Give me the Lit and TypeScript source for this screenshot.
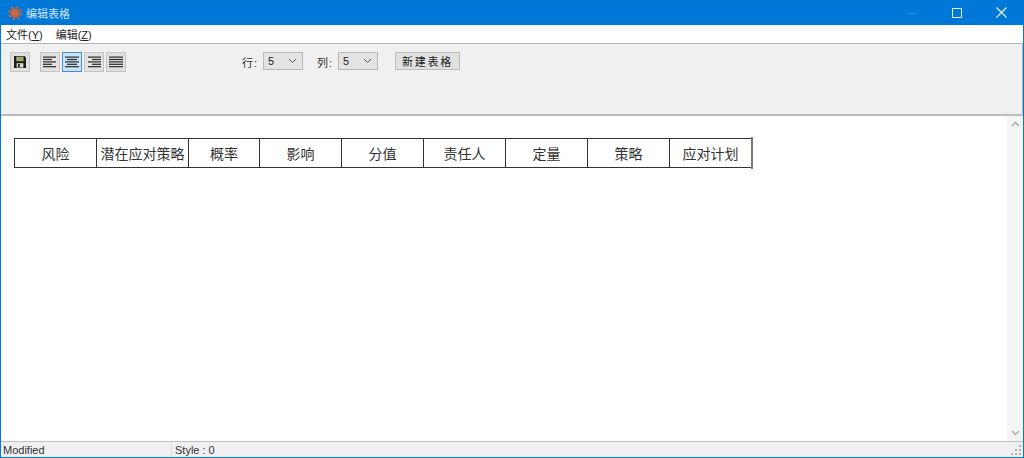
import { LitElement, html, css, svg } from "lit";
import { customElement } from "lit/decorators.js";

const FONT = `"Liberation Sans", "Noto Sans CJK SC", sans-serif`;
const COLS: [string, number][] = [
  ["风险", 82], ["潜在应对策略", 92], ["概率", 71], ["影响", 82], ["分值", 82],
  ["责任人", 82], ["定量", 82], ["策略", 82], ["应对计划", 82],
];
const alignIcon = (rows: [number, number][]) => html`<svg width="14" height="12" viewBox="0 0 14 12">
  ${rows.map(([x, w], i) => svg`<rect x=${x} y=${i * 2.4 + 0.5} width=${w} height="1.2" fill="#2a2a2a"></rect>`)}
</svg>`;

@customElement("app-root")
export class AppRoot extends LitElement {
  static styles = css`
    :host { display: block; width: 1024px; height: 458px; overflow: hidden; font-family: ${css([FONT] as any) && css`"Liberation Sans", "Noto Sans CJK SC", sans-serif`}; }
    .win { box-sizing: border-box; width: 1024px; height: 458px; display: flex; flex-direction: column; border: 1px solid #0078d7; border-top: 0; background: #fff; color: #1a1a1a; }
    .title { height: 25px; flex: none; background: #0078d7; margin: 0 -1px; display: flex; align-items: center; padding-left: 8px; color: #cfe4f7; font-size: 11px; }
    .title .name { margin-left: 4px; }
    .title .controls { margin-left: auto; display: flex; align-items: center; }
    .ctl { width: 45px; height: 25px; display: flex; align-items: center; justify-content: center; }
    .menu { height: 18px; flex: none; display: flex; align-items: center; gap: 13px; padding-left: 5px; font-size: 11px; background: #fff; color: #222; }
    .menu u { text-decoration: underline; }
    .toolbar { box-sizing: border-box; height: 73px; flex: none; background: #f0f0f0; border: 1px solid #b4b4b4; border-left: 0; border-right-width: 1px; border-bottom-width: 2px; border-bottom-color: #bdbdbd; padding: 8px 0 0 9px; display: flex; align-items: flex-start; }
    .tb { box-sizing: border-box; width: 20px; height: 20px; background: #e1e1e1; border: 1px solid #c4c4c4; display: flex; align-items: center; justify-content: center; }
    .tb.on { background: #cce4f7; border-color: #3b8fd0; }
    .saveb { margin-right: 10px; }
    .aligns { display: flex; gap: 2px; }
    .lbl { font-size: 11px; color: #333; margin-top: 2px; letter-spacing: 1px; }
    .l1 { margin-left: 116px; width: 21px; }
    .l2 { margin-left: 14px; width: 21px; }
    .sel { box-sizing: border-box; width: 40px; height: 18px; background: #e3e3e3; border: 1px solid #b8b8b8; display: flex; align-items: center; justify-content: space-between; padding: 0 5px 0 4px; font-size: 11px; color: #222; }
    .newb { box-sizing: border-box; margin-left: 17px; width: 65px; height: 18px; background: #e1e1e1; border: 1px solid #bcbcbc; font-size: 11px; color: #222; display: flex; align-items: center; justify-content: center; letter-spacing: 1.8px; }
    .body { flex: 1; min-height: 0; display: flex; }
    .doc { flex: 1; padding: 22px 0 0 13px; }
    .tbl { display: inline-flex; position: relative; box-sizing: border-box; height: 30px; border: solid #333; border-width: 1px 0 1px 1px; }
    .cell { box-sizing: border-box; height: 28px; border-right: 1px solid #333; font-size: 14px; color: #333; display: flex; align-items: center; justify-content: center; white-space: nowrap; }
    .caret { position: absolute; right: -1px; top: -2px; width: 2px; height: 32px; background: #777; }
    .sb { width: 16px; flex: none; background: #f4f4f4; display: flex; flex-direction: column; justify-content: space-between; align-items: center; padding: 5px 0; box-sizing: border-box; }
    .status { height: 16px; flex: none; box-sizing: border-box; background: #f0f0f0; border-top: 1px solid #c0c0c0; display: flex; align-items: center; font-size: 11px; color: #333; position: relative; }
    .s1 { width: 171px; padding-left: 2px; box-sizing: border-box; border-right: 1px solid #dcdcdc; height: 100%; display: flex; align-items: center; }
    .s2 { padding-left: 3px; }
    .grip { position: absolute; right: 1px; bottom: 1px; }
  `;

  render() {
    const chev = html`<svg width="9" height="6" viewBox="0 0 9 6"><path d="M1 1l3.5 3.5L8 1" fill="none" stroke="#555" stroke-width="1"/></svg>`;
    return html`<div class="win">
      <div class="title">
        <svg width="14" height="14" viewBox="0 0 14 14">
          <circle cx="7" cy="7" r="4.6" fill="#c9653f"/>
          <circle cx="7" cy="7" r="6" fill="none" stroke="#c9653f" stroke-width="2" stroke-dasharray="2.2 2.5"/>
        </svg>
        <span class="name">编辑表格</span>
        <div class="controls">
          <div class="ctl"><svg width="10" height="10" viewBox="0 0 10 10"><path d="M0 5.5h10" stroke="#2e8ede"/></svg></div>
          <div class="ctl"><svg width="10" height="10" viewBox="0 0 10 10"><rect x=".5" y=".5" width="9" height="9" fill="none" stroke="#e6f2fb"/></svg></div>
          <div class="ctl"><svg width="11" height="11" viewBox="0 0 11 11"><path d="M.5.5l10 10M10.5.5l-10 10" stroke="#f2f8fd" stroke-width="1.1"/></svg></div>
        </div>
      </div>
      <div class="menu"><span>文件(<u>Y</u>)</span><span>编辑(<u>Z</u>)</span></div>
      <div class="toolbar">
        <div class="tb saveb"><svg width="14" height="14" viewBox="0 0 14 14">
          <path d="M1 1h10.5L13 2.5V13H1z" fill="#1c1c1c"/>
          <rect x="3.2" y="1.6" width="7.4" height="4.6" fill="#9fa86a"/>
          <rect x="3.6" y="8.2" width="6.8" height="4.3" fill="#d8d8c8"/>
          <rect x="5" y="9" width="1.8" height="3" fill="#222"/>
        </svg></div>
        <div class="aligns">
          <div class="tb">${alignIcon([[0, 13], [0, 9], [0, 13], [0, 9], [0, 13]])}</div>
          <div class="tb on">${alignIcon([[0, 14], [2, 10], [0, 14], [2, 10], [0, 14]])}</div>
          <div class="tb">${alignIcon([[1, 13], [5, 9], [1, 13], [5, 9], [1, 13]])}</div>
          <div class="tb">${alignIcon([[0, 14], [0, 14], [0, 14], [0, 14], [0, 14]])}</div>
        </div>
        <span class="lbl l1">行:</span>
        <div class="sel"><span>5</span>${chev}</div>
        <span class="lbl l2">列:</span>
        <div class="sel"><span>5</span>${chev}</div>
        <div class="newb">新建表格</div>
      </div>
      <div class="body">
        <div class="doc">
          <div class="tbl">
            ${COLS.map(([t, w]) => html`<div class="cell" style="width:${w}px">${t}</div>`)}
            <div class="caret"></div>
          </div>
        </div>
        <div class="sb">
          <svg width="9" height="6" viewBox="0 0 9 6"><path d="M1 5l3.5-3.5L8 5" fill="none" stroke="#a8a8a8" stroke-width="1.4"/></svg>
          <svg width="9" height="6" viewBox="0 0 9 6"><path d="M1 1l3.5 3.5L8 1" fill="none" stroke="#a8a8a8" stroke-width="1.4"/></svg>
        </div>
      </div>
      <div class="status">
        <div class="s1">Modified</div>
        <div class="s2">Style : 0</div>
        <svg class="grip" width="12" height="12" viewBox="0 0 12 12" fill="#b0b0b0">
          <rect x="9" y="9" width="2" height="2"/><rect x="5" y="9" width="2" height="2"/><rect x="1" y="9" width="2" height="2"/>
          <rect x="9" y="5" width="2" height="2"/><rect x="5" y="5" width="2" height="2"/><rect x="9" y="1" width="2" height="2"/>
        </svg>
      </div>
    </div>`;
  }
}
